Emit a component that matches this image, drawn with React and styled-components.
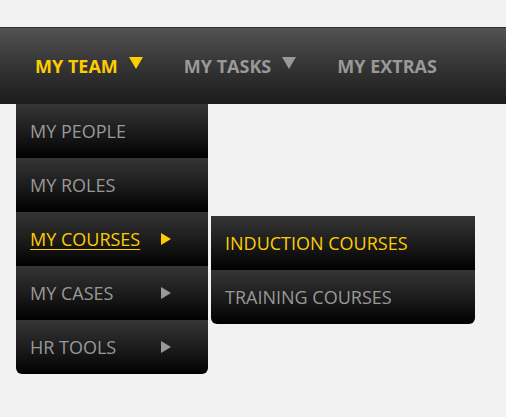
import React from 'react';
import styled, { createGlobalStyle } from 'styled-components';

const Global = createGlobalStyle`
  body {
    margin: 0;
    background: #f2f2f2;
    font-family: "Open Sans", "Liberation Sans", sans-serif;
  }
`;

const Page = styled.div`
  padding-top: 27px;
  height: 390px;
`;

const NavBar = styled.nav`
  height: 76px;
  border-top: 1px solid #333;
  background: linear-gradient(to bottom, #525252 0%, #3a3a3a 40%, #1b1b1b 100%);
  display: flex;
  align-items: stretch;
  padding-left: 16px;
`;

const NavItem = styled.div`
  position: relative;
  display: flex;
  align-items: center;
  gap: 11px;
  padding: 0 22px 0 19px;
  font-size: 18px;
  font-weight: 700;
  text-transform: uppercase;
  color: ${p => (p.active ? '#ffcc00' : '#999')};
  cursor: pointer;
`;

const DownArrow = styled.span`
  width: 0;
  height: 0;
  border-left: 7px solid transparent;
  border-right: 7px solid transparent;
  border-top: 12px solid ${p => (p.active ? '#ffcc00' : '#999')};
  margin-top: -6px;
`;

const RightArrow = styled.span`
  width: 0;
  height: 0;
  border-top: 6.5px solid transparent;
  border-bottom: 6.5px solid transparent;
  border-left: 10px solid ${p => (p.active ? '#ffcc00' : '#999')};
  margin-left: -1px;
`;

const Menu = styled.ul`
  position: absolute;
  top: ${p => p.top}px;
  left: ${p => p.left};
  width: ${p => p.width}px;
  margin: 0;
  padding: 0;
  list-style: none;
  border-radius: 0 0 6px 6px;
  font-weight: 400;
  z-index: 2;
`;

const MenuItem = styled.li`
  position: relative;
  height: 54px;
  display: flex;
  align-items: center;
  padding-left: ${p => p.pad}px;
  font-size: 18px;
  font-weight: 400;
  color: ${p => (p.active ? '#ffcc00' : '#999')};
  background: linear-gradient(to bottom, #353535 0%, #1a1a1a 55%, #000 100%);
  &:last-child {
    border-radius: 0 0 6px 6px;
  }
`;

const Label = styled.span`
  width: 132px;
  text-decoration: ${p => (p.underline ? 'underline' : 'none')};
  text-underline-offset: 3px;
  text-decoration-thickness: 1px;
`;

const sub = ['Induction Courses', 'Training Courses'];

const items = [
  { label: 'My People' },
  { label: 'My Roles' },
  { label: 'My Courses', arrow: true, active: true, sub },
  { label: 'My Cases', arrow: true },
  { label: 'HR Tools', arrow: true },
];

export default function App() {
  return (
    <Page>
      <Global />
      <NavBar>
        <NavItem active>
          My Team
          <DownArrow active />
          <Menu top={76} left="0" width={192}>
            {items.map(it => (
              <MenuItem key={it.label} pad={14} active={it.active}>
                <Label underline={it.active}>{it.label}</Label>
                {it.arrow && <RightArrow active={it.active} />}
                {it.sub && (
                  <Menu top={4} left="195px" width={264}>
                    {it.sub.map((s, i) => (
                      <MenuItem key={s} pad={14} active={i === 0}>
                        {s}
                      </MenuItem>
                    ))}
                  </Menu>
                )}
              </MenuItem>
            ))}
          </Menu>
        </NavItem>
        <NavItem>
          My Tasks
          <DownArrow />
        </NavItem>
        <NavItem>My Extras</NavItem>
      </NavBar>
    </Page>
  );
}
